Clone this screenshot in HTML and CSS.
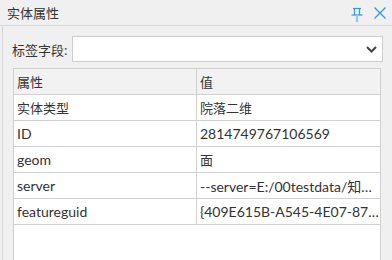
FILE: index.html
```html
<!DOCTYPE html>
<html lang="zh-CN">
<head>
    <meta charset="UTF-8">
    <meta name="viewport" content="width=device-width, initial-scale=1.0">
    <title>实体属性</title>
    <link rel="stylesheet" href="styles.css">
</head>
<body>
    <div class="panel">
        <div class="titlebar">
            <span class="title">实体属性</span>
            <div class="tools">
                <svg class="pin" width="12" height="16" viewBox="0 0 12 16">
                    <path d="M2 1.5h8" stroke="#2e9ae0" stroke-width="1.2" fill="none"/>
                    <path d="M3.5 1.5v6.5M8.5 1.5v6.5" stroke="#2e9ae0" stroke-width="1.2" fill="none"/>
                    <path d="M0.5 8h11" stroke="#2e9ae0" stroke-width="1.2" fill="none"/>
                    <path d="M6 8.5v6.5" stroke="#8cc8ef" stroke-width="2" fill="none"/>
                </svg>
                <svg class="close" width="12" height="12" viewBox="0 0 12 12">
                    <path d="M0.5 0.5l11 11M11.5 0.5l-11 11" stroke="#2e9ae0" stroke-width="1.3" fill="none"/>
                </svg>
            </div>
        </div>
        <div class="content">
            <div class="field">
                <label class="field-label">标签字段:</label>
                <div class="combo">
                    <svg class="chevron" width="11" height="7" viewBox="0 0 11 7">
                        <path d="M1 1l4.5 4.5L10 1" stroke="#444" stroke-width="2" fill="none"/>
                    </svg>
                </div>
            </div>
            <div class="grid">
                <table>
                    <thead>
                        <tr><th>属性</th><th>值</th></tr>
                    </thead>
                    <tbody>
                        <tr><td>实体类型</td><td>院落二维</td></tr>
                        <tr><td class="latin">ID</td><td class="latin">2814749767106569</td></tr>
                        <tr><td class="latin">geom</td><td>面</td></tr>
                        <tr><td class="latin">server</td><td class="latin">--server=E:/00testdata/知…</td></tr>
                        <tr><td class="latin">featureguid</td><td class="latin">{409E615B-A545-4E07-87…</td></tr>
                    </tbody>
                </table>
            </div>
        </div>
    </div>
</body>
</html>
```

FILE: styles.css
```css
body, html {
    margin: 0;
    padding: 0;
    height: 100%;
    overflow: hidden;
    background: #f0f0f0;
    color: #333;
    font-family: "Noto Sans", "Noto Sans CJK SC", sans-serif;
    font-size: 13px;
}

.panel {
    display: flex;
    flex-direction: column;
    height: 260px;
}

/* Titelleiste */
.titlebar {
    display: flex;
    align-items: center;
    justify-content: space-between;
    height: 25px;
    padding: 0 6px 0 7px;
    border-bottom: 1px solid #d7d7d7;
}

.tools {
    display: flex;
    align-items: center;
    gap: 11px;
}

.pin {
    display: block;
    margin-top: 4px;
}

.close {
    display: block;
}

.content {
    flex: 1;
    display: flex;
    flex-direction: column;
    margin-left: 2px;
    padding: 10px 9px 0 9px;
    border-left: 1px solid #d7d7d7;
}

.field {
    display: flex;
    align-items: center;
    height: 26px;
}

.field-label {
    width: 60px;
}

.combo {
    flex: 1;
    height: 24px;
    display: flex;
    align-items: center;
    justify-content: flex-end;
    padding-right: 5px;
    background: #fff;
    border: 1px solid #cdcdcd;
}

.chevron {
    display: block;
}

/* Tabelle */
.grid {
    flex: 1;
    margin: 6px 2px 0 1px;
    background: #fff;
    border: 1px solid #d0d0d0;
    border-bottom: none;
}

table {
    width: 100%;
    border-collapse: collapse;
    table-layout: fixed;
}

th, td {
    height: 25px;
    padding: 0 0 0 3px;
    text-align: left;
    font-weight: normal;
    white-space: nowrap;
    overflow: hidden;
    text-overflow: ellipsis;
    border-bottom: 1px solid #d0d0d0;
}

/* lateinischer Text wirkt im Original etwas breiter */
td.latin {
    font-family: Lato, "Noto Sans CJK SC", sans-serif;
    font-size: 14px;
}

th {
    background: #f2f2f2;
}

th:first-child, td:first-child {
    width: 179px;
    border-right: 1px solid #d0d0d0;
}
```
